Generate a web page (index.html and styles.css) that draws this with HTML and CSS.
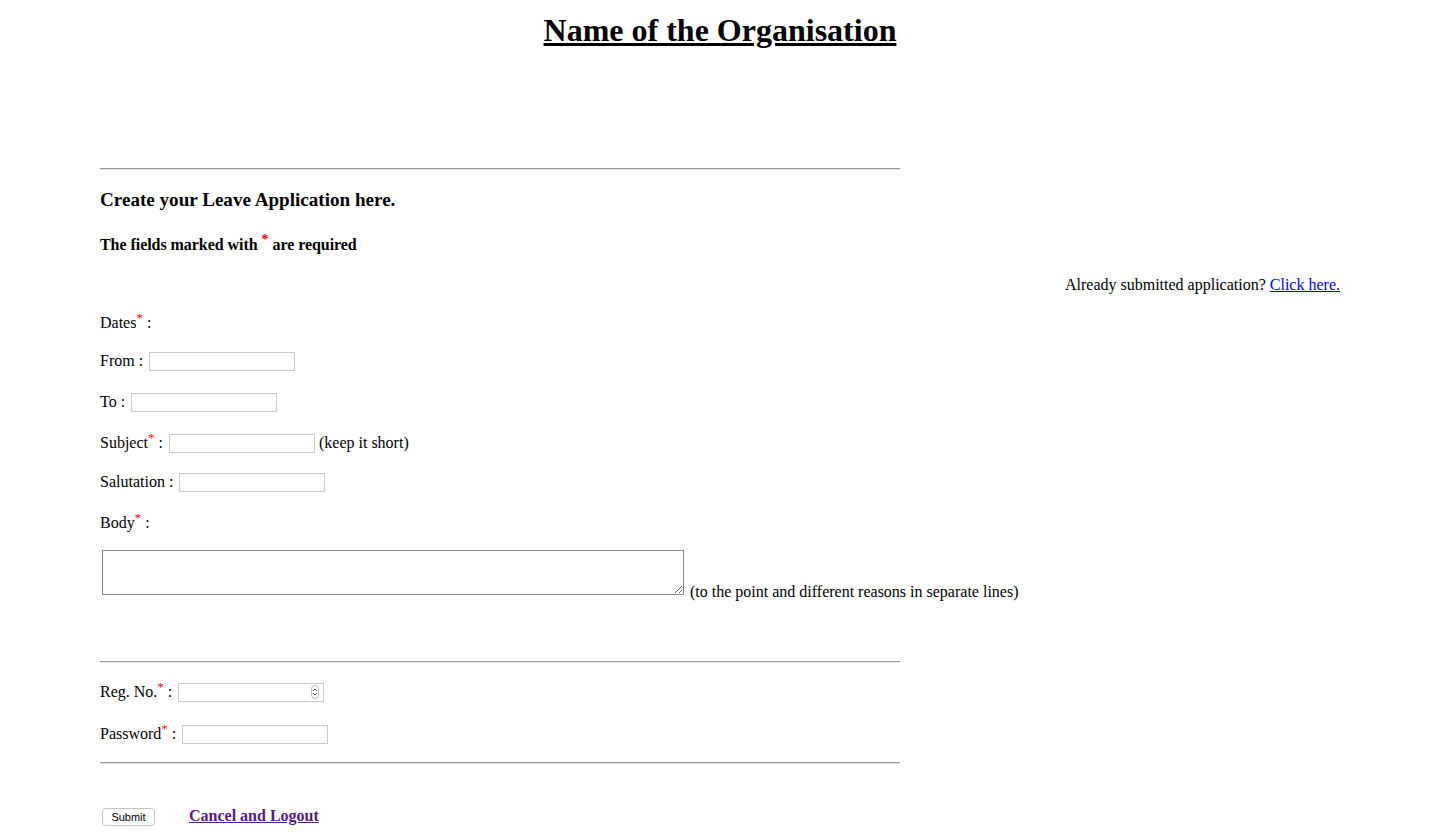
FILE: index.html
```html
<!DOCTYPE html>
<html>
<head>
<meta charset="utf-8">
<title>Leave Application</title>
<link rel="stylesheet" href="styles.css">
</head>
<body>
<h1 class="org-title">Name of the Organisation</h1>
<div class="page">
  <hr class="rule rule-top">
  <h3 class="form-title">Create your Leave Application here.</h3>
  <p class="required-note">The fields marked with <sup class="req">*</sup> are required</p>
  <p class="already">Already submitted application? <a href="#" class="link-new">Click here.</a></p>

  <div class="row row-dates"><span class="label">Dates<sup class="req">*</sup> :</span></div>
  <div class="row row-from"><span class="label">From : </span><input type="text" class="field"></div>
  <div class="row row-to"><span class="label">To : </span><input type="text" class="field"></div>
  <div class="row row-subject"><span class="label">Subject<sup class="req">*</sup> : </span><input type="text" class="field"><span class="label"> (keep it short)</span></div>
  <div class="row row-salutation"><span class="label">Salutation : </span><input type="text" class="field"></div>
  <div class="row row-body"><span class="label">Body<sup class="req">*</sup> :</span></div>
  <div class="body-row">
    <textarea class="body-area"></textarea>
    <span class="hint">&nbsp;(to the point and different reasons in separate lines)</span>
  </div>

  <hr class="rule rule-mid">
  <div class="row row-reg"><span class="label">Reg. No.<sup class="req">*</sup> : </span><span class="num-wrap"><input type="text" class="field"><span class="spinner"><svg width="8" height="14" viewBox="0 0 8 14"><rect x="0.5" y="0.5" width="7" height="13" rx="3.5" fill="#fff" stroke="#bdbdbd"/><path d="M2.2 5.8 L4 3.9 L5.8 5.8" fill="none" stroke="#444" stroke-width="1"/><path d="M2.2 8.2 L4 10.1 L5.8 8.2" fill="none" stroke="#444" stroke-width="1"/></svg></span></span></div>
  <div class="row row-password"><span class="label">Password<sup class="req">*</sup> : </span><input type="password" class="field"></div>
  <hr class="rule rule-bottom">

  <div class="actions">
    <button type="button" class="submit-btn">Submit</button>
    <a href="#" class="cancel-link">Cancel and Logout</a>
  </div>
</div>
</body>
</html>
```

FILE: styles.css
```css
html, body {
  margin: 0;
  padding: 0;
  background: #fff;
}

body {
  font-family: "Liberation Serif", "Times New Roman", serif;
  font-size: 16px;
  color: #000;
}

.org-title {
  margin: 0;
  padding-top: 12px;
  font-size: 32px;
  line-height: 37px;
  font-weight: bold;
  text-align: center;
  text-decoration: underline;
}

.page {
  padding: 0 100px;
}

.rule {
  width: 800px;
  height: 0;
  margin: 0;
  border: 0;
  border-top: 1px solid #9b9b9b;
  border-bottom: 1px solid #e6e6e6;
}

.rule-top { margin-top: 119px; }

.form-title {
  margin: 19px 0 0;
  font-size: 19.1px;
  line-height: 22px;
  font-weight: bold;
}

.required-note {
  margin: 24px 0 0;
  font-size: 16px;
  line-height: 20px;
  height: 20px;
  font-weight: bold;
  letter-spacing: -0.05px;
}

.req {
  color: #ff0000;
  font-size: 13px;
  line-height: 0;
  vertical-align: 6px;
}

.required-note .req {
  font-size: 14px;
  vertical-align: 6px;
}

.already {
  margin: 20px 0 0;
  line-height: 20px;
  height: 20px;
  text-align: right;
}

.link-new {
  color: #0000ee;
  text-decoration: underline;
}

.row {
  display: flex;
  align-items: center;
  height: 20px;
  line-height: 20px;
}

.label {
  white-space: pre;
  line-height: 20px;
}

.row-dates { margin-top: 18px; }
.row-from { margin-top: 18px; }
.row-to { margin-top: 21px; }
.row-subject { margin-top: 21px; }
.row-salutation { margin-top: 19px; }
.row-body { margin-top: 21px; }

.field {
  box-sizing: border-box;
  width: 146px;
  height: 19px;
  margin: 0 0 0 2px;
  padding: 0 2px;
  border: 1px solid #cbcbcb;
  background: #fff;
  font-family: "Liberation Sans", Arial, sans-serif;
  font-size: 13px;
  outline: none;
}

.body-row {
  display: flex;
  align-items: flex-end;
  margin-top: 17px;
}

.body-area {
  box-sizing: border-box;
  width: 582px;
  height: 45px;
  margin: 0 0 7px 2px;
  padding: 2px;
  border: 1px solid #8a8a8a;
  font-family: "Liberation Mono", monospace;
  font-size: 13px;
  resize: both;
}

.hint {
  line-height: 20px;
  height: 20px;
  margin-left: 2px;
}

.rule-mid { margin-top: 59px; }

.row-reg { margin-top: 19px; }

.num-wrap {
  position: relative;
  display: inline-flex;
}

.spinner {
  position: absolute;
  right: 5px;
  top: 2px;
  width: 8px;
  height: 14px;
  display: block;
}

.spinner svg { display: block; }

.row-password { margin-top: 22px; }

.rule-bottom { margin-top: 18px; }

.actions {
  display: flex;
  align-items: center;
  margin-top: 43px;
  height: 20px;
}

.submit-btn {
  box-sizing: border-box;
  width: 53px;
  height: 18px;
  margin: 0 0 0 2px;
  padding: 0;
  border: 1px solid #c6c6c6;
  border-radius: 4px;
  background: #fff;
  font-family: "Liberation Sans", Arial, sans-serif;
  font-size: 11px;
  color: #000;
  line-height: 16px;
}

.cancel-link {
  margin-left: 34px;
  font-weight: bold;
  color: #551a8b;
  text-decoration: underline;
  line-height: 20px;
  position: relative;
  top: -1px;
}
```
